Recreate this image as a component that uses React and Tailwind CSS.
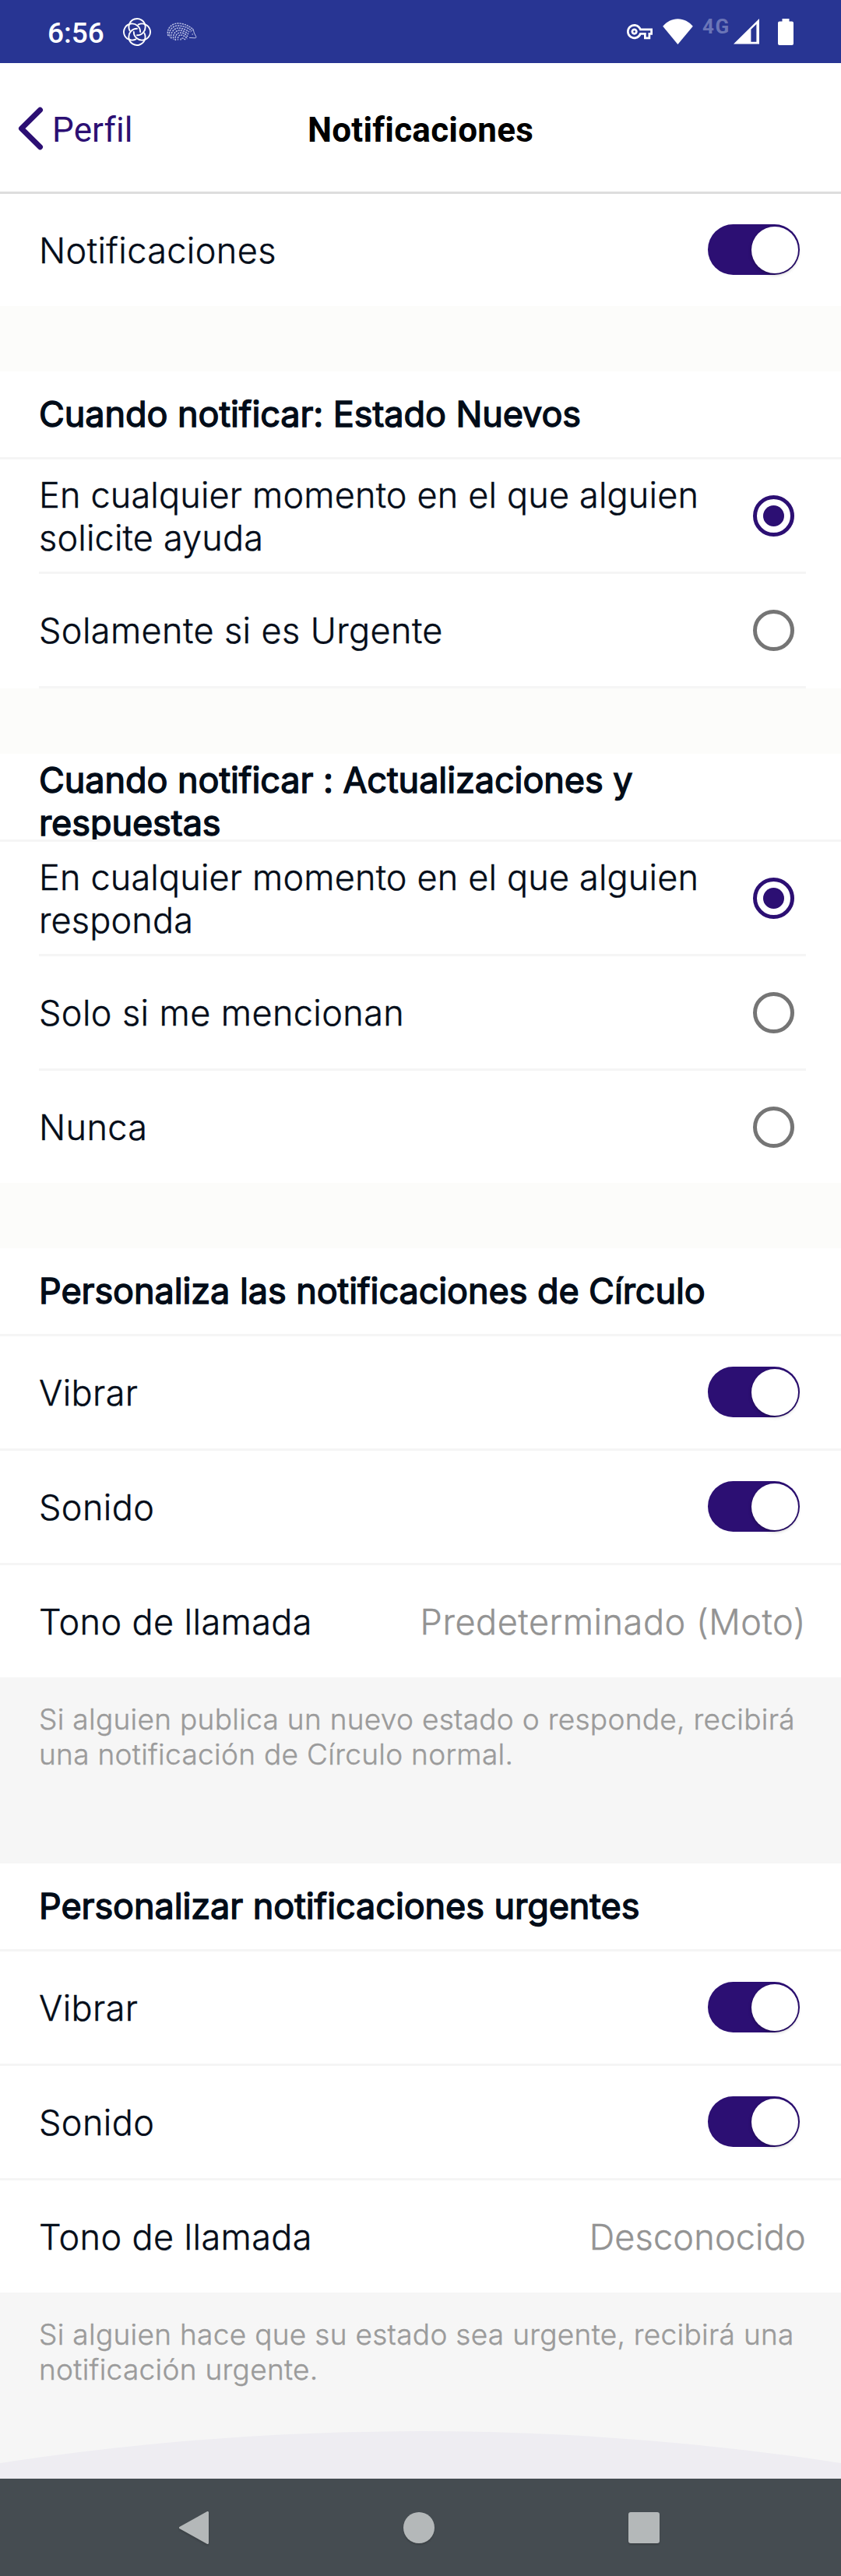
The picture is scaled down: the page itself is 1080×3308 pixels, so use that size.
import React from "react";
import { MdOutlineVpnKey } from "react-icons/md";

function KnotIcon() {
  return (
    <svg width="36" height="36" viewBox="0 0 36 36" fill="none" stroke="#fff" strokeWidth="1.9" strokeLinecap="round">
      {[0, 90, 180, 270].map((a) => (
        <path key={a} transform={`rotate(${a} 18 18)`} d="M18 22.2A10.6 10.6 0 1 0 8.6 16.4" />
      ))}
    </svg>
  );
}

function HedgehogIcon() {
  return (
    <svg width="39" height="24" viewBox="0 0 39 24" fill="none" stroke="#b9bfe4" strokeWidth="1.5">
      <g strokeDasharray="2.2 1">
        <path d="M2 17C-1 8 7 1 14 1C22 1 28 4 34 8.5" />
        <path d="M4 19C1 11 8 4 14 4C21 4 26 6 31 9.5" strokeDashoffset="1.6" />
        <path d="M6 20.5C4 13 10 7 15 7C20 7 25 9 29 12" />
        <path d="M9 22C7 15 12 10 16 10C20 10 25 12 28 15" strokeDashoffset="1.6" />
        <path d="M11.5 23C10 17 14 13 17 13C20 13 24 14 27 18" />
        <path d="M14.5 22.5C14 18 16 16 18 16C20 16 24 17 26.5 21" strokeDashoffset="1" />
        <path d="M18 22.5C18 20 20 18.5 24 22" />
      </g>
      <path d="M30.5 12L34.2 8.5L35.2 13L38 18.6Q38 20 36 19.8L29 19.4" strokeWidth="1" />
      <circle cx="33.2" cy="15" r="0.8" fill="#b9bfe4" stroke="none" />
    </svg>
  );
}

function StatusBar() {
  return (
    <div className="flex h-[81px] items-center bg-[#283593] pl-[61px] pr-[61px] font-[Roboto] text-white">
      <div className="w-[97px] pt-1 text-[37px] leading-none font-medium">6:56</div>
      <KnotIcon />
      <div className="ml-5"><HedgehogIcon /></div>
      <div className="ml-auto flex items-center">
        <MdOutlineVpnKey size={33} />
        <svg className="ml-[13px]" width="39" height="34" viewBox="0 0 39 34" fill="#fff">
          <path d="M19.4 33L0.2 9.8C5 4 12 0.3 19.4 0.3S34 4 38.8 9.8Z" />
        </svg>
        <div className="mb-[13px] ml-3 w-[40px] text-[26px] leading-none font-bold tracking-[1.6px] text-[#6b75b7]">4G</div>
        <svg width="33" height="33" viewBox="0 0 33 33" fill="#fff" fillRule="evenodd">
          <path d="M0 32.5L33 0V32.5ZM22.4 13.8V29.8H29.4V7Z" />
        </svg>
        <svg className="ml-6" width="20" height="34" viewBox="0 0 20 34" fill="#fff">
          <path d="M5.5 0H14.5V3.6H18A2 2 0 0 1 20 5.6V32A2 2 0 0 1 18 34H2A2 2 0 0 1 0 32V5.6A2 2 0 0 1 2 3.6H5.5Z" />
        </svg>
      </div>
    </div>
  );
}

function Header() {
  return (
    <div className="grid h-[168px] grid-cols-[1fr_auto_1fr] items-center border-b-[3px] border-[#dddddd] bg-white font-[Roboto] text-[44px] leading-none">
      <div className="flex items-center pl-[23px] text-[#2c0f73]">
        <svg className="mt-[2px]" width="33" height="56" viewBox="0 0 33 56" fill="none" stroke="currentColor" strokeWidth="7" strokeLinecap="round" strokeLinejoin="round">
          <path d="M28.5 4.3L4.5 28L28.5 51.7" />
        </svg>
        <span className="ml-[11px] pt-[7px] tracking-[0.15px]">Perfil</span>
      </div>
      <h1 className="pt-[7px] font-bold tracking-[0.25px] text-black">Notificaciones</h1>
      <div />
    </div>
  );
}

function Toggle() {
  return (
    <div className="mr-2 mb-px flex h-[65px] w-[118px] shrink-0 items-center justify-end rounded-full bg-[#2c0f73] pr-[2.5px]">
      <div className="h-[60px] w-[60px] rounded-full bg-white shadow-[0_2px_4px_rgba(0,0,0,0.25)]" />
    </div>
  );
}

function Radio({ on }) {
  return on ? (
    <div className="mr-[15px] flex h-[53px] w-[53px] shrink-0 items-center justify-center rounded-full border-5 border-[#2c0f73]">
      <div className="h-[27px] w-[27px] rounded-full bg-[#2c0f73]" />
    </div>
  ) : (
    <div className="mr-[15px] h-[53px] w-[53px] shrink-0 rounded-full border-5 border-[#757575]" />
  );
}

const THIN = "font-light tracking-[0.4px] [-webkit-text-stroke:0.4px_#020c18]";
const THIN_LONG = "pt-[2px] font-light tracking-[0.17px] [-webkit-text-stroke:0.4px_#020c18]";

function Row({ label, labelClass = THIN, line = "full", children }) {
  return (
    <div className={line === "full" ? "border-b-[3px] border-[#f5f5f5] bg-white pr-[45px] pl-[50px]" : "bg-white pr-[45px] pl-[50px]"}>
      <div className={line === "inset" ? "flex h-[147px] items-center justify-between border-b-[3px] border-[#f5f5f5]" : "flex h-[144px] items-center justify-between"}>
        <div className={"max-w-[880px] " + labelClass}>{label}</div>
        {children}
      </div>
    </div>
  );
}

function Heading({ children, tall }) {
  return (
    <div className={tall ? "h-[113px] overflow-hidden border-b-[3px] border-[#f5f5f5] bg-white pt-[6px] pl-[50px]" : "flex h-[113px] items-center border-b-[3px] border-[#f5f5f5] bg-white pb-px pl-[50px]"}>
      <h2 className="w-[860px] tracking-[-0.08px] [-webkit-text-stroke:1.4px_#020c18]">{children}</h2>
    </div>
  );
}

function Note({ children, className }) {
  return (
    <div className={"bg-[#f6f6f6] pt-[31px] pr-10 pl-[50px] text-[37px] leading-[45px] font-light tracking-[0.3px] text-[#9b9b9b] [-webkit-text-stroke:0.4px_#9b9b9b] " + className}>
      {children}
    </div>
  );
}

const Gap = () => <div className="h-[84px] bg-[#fcfcfa]" />;

export default function App() {
  return (
    <div className="flex h-[3308px] w-[1080px] flex-col overflow-hidden bg-white font-[Inter] text-[45px] leading-[55px] text-[#020c18]">
      <StatusBar />
      <Header />
      <Row label="Notificaciones" line="none"><Toggle /></Row>
      <Gap />
      <Heading>Cuando notificar: Estado Nuevos</Heading>
      <Row label={<>En cualquier momento en el que alguien<br />solicite ayuda</>} labelClass={THIN_LONG} line="inset"><Radio on /></Row>
      <Row label="Solamente si es Urgente" line="inset"><Radio /></Row>
      <Gap />
      <Heading tall>Cuando notificar : Actualizaciones y<br />respuestas</Heading>
      <Row label={<>En cualquier momento en el que alguien<br />responda</>} labelClass={THIN_LONG} line="inset"><Radio on /></Row>
      <Row label="Solo si me mencionan" line="inset"><Radio /></Row>
      <Row label="Nunca" line="none"><Radio /></Row>
      <Gap />
      <Heading>Personaliza las notificaciones de Círculo</Heading>
      <Row label="Vibrar"><Toggle /></Row>
      <Row label="Sonido"><Toggle /></Row>
      <Row label="Tono de llamada" line="none">
        <div className="font-light tracking-[0.55px] text-[#939393] [-webkit-text-stroke:0.4px_#939393]">Predeterminado (Moto)</div>
      </Row>
      <Note className="h-[239px]">Si alguien publica un nuevo estado o responde, recibirá<br />una notificación de Círculo normal.</Note>
      <Heading>Personalizar notificaciones urgentes</Heading>
      <Row label="Vibrar"><Toggle /></Row>
      <Row label="Sonido"><Toggle /></Row>
      <Row label="Tono de llamada" line="none">
        <div className="font-light tracking-[0.2px] text-[#939393] [-webkit-text-stroke:0.4px_#939393]">Desconocido</div>
      </Row>
      <Note className="h-[178px]">Si alguien hace que su estado sea urgente, recibirá una<br />notificación urgente.</Note>
      <svg className="block shrink-0 bg-[#f6f6f6]" width="1080" height="61" viewBox="0 0 1080 61">
        <circle cx="540" cy="3577" r="3577" fill="#eeedf2" />
      </svg>
      <div className="flex h-[125px] shrink-0 items-center justify-between bg-[#454c51] pr-[233px] pl-[229px]">
        <svg className="drop-shadow-[0_2px_1px_rgba(0,0,0,0.15)]" width="40" height="44" viewBox="0 0 40 44" fill="#b4b8b9" stroke="#b4b8b9" strokeWidth="3" strokeLinejoin="round">
          <path d="M2.5 22L37.5 2.5V41.5Z" />
        </svg>
        <div className="h-[40px] w-[40px] rounded-full bg-[#b4b8b9] shadow-[0_2px_2px_rgba(0,0,0,0.15)]" />
        <div className="h-[40px] w-[40px] rounded-[3px] bg-[#b4b8b9] shadow-[0_2px_2px_rgba(0,0,0,0.15)]" />
      </div>
    </div>
  );
}
